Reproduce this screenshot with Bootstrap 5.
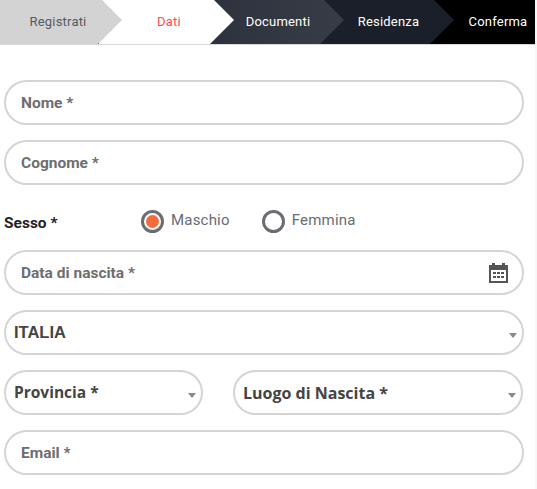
<!DOCTYPE html>
<html lang="it">
<head>
<meta charset="utf-8">
<link href="https://cdn.jsdelivr.net/npm/bootstrap@5.3.0/dist/css/bootstrap.min.css" rel="stylesheet">
<style>
html,body{overflow:hidden;height:489px;background:#f7f7f7;font-family:"Roboto",sans-serif}
.pagewrap{width:535px;height:489px;background:#fff}
.stepbar{height:45px;background:#000;border-bottom:1px solid #d8d8d8;overflow:hidden;font-size:13px;letter-spacing:.2px}
.stepitem{position:relative;height:44px;display:flex;align-items:center;justify-content:center;flex:none;clip-path:polygon(0 0,calc(100% - 20px) 0,100% 20px,calc(100% - 24px) 100%,0 100%)}
.s1{background:#d3d3d3;color:#555a63;width:122px;padding-right:6px;z-index:5}
.s2{background:#fff;color:#ff4a5a;width:135px;margin-left:-23px;padding-left:5px;z-index:4}
.s3{background:linear-gradient(90deg,#2d323e,#383c46);color:#fff;width:134px;margin-left:-24px;padding-left:2px;z-index:3}
.s4{background:#1b1f29;color:#fff;width:134px;margin-left:-24px;padding-left:3px;z-index:2}
.s5{background:#000;color:#fff;width:105px;margin-left:-24px;padding-left:31px;z-index:1;clip-path:none}
.formwrap{padding:35px 11px 0 4px}
.pillfield{height:45px;border:2px solid #d4d4d4;border-radius:23px;display:flex;align-items:center;padding:2px 14px 0 15px;font-weight:700;font-size:15.5px;color:#6e6e6e;background:#fff;margin-bottom:15px;justify-content:space-between}
.pillfield svg{margin-top:-2px}
.selfield{color:#444;padding:0 8px;position:relative;font-family:"Open Sans",sans-serif;font-size:15.5px}
.capsfield{font-family:"Liberation Sans",sans-serif;font-size:16.5px}
.luogo{font-size:16px}
.selfield::after{content:"";position:absolute;right:5px;top:21px;border-style:solid;border-width:5px 4px 0 4px;border-color:#888 transparent transparent transparent}
.sexrow{height:50px;margin-top:-7px;margin-bottom:7px;padding-top:6px;display:flex;align-items:center}
.sexlabel{font-weight:700;font-size:15.5px;color:#222;width:137px;padding-top:5px}
.radioitem{display:flex;align-items:center;gap:7px;font-size:15px;letter-spacing:.2px;color:#666c75;margin-right:32px}
.radiotext{margin-top:-2px}
.radiomark{width:23px;height:23px;border:3px solid #6c6c72;border-radius:50%;display:flex;align-items:center;justify-content:center}
.radiodot{width:13px;height:13px;border-radius:50%;background:#f56c3a}
.halfrow{display:flex;gap:30px}
.prov{width:199px}
.luogo{width:290px}
</style>
</head>
<body>
<div class="pagewrap">
<div class="stepbar d-flex">
  <div class="stepitem s1">Registrati</div>
  <div class="stepitem s2">Dati</div>
  <div class="stepitem s3">Documenti</div>
  <div class="stepitem s4">Residenza</div>
  <div class="stepitem s5">Conferma</div>
</div>
<form class="formwrap">
  <div class="pillfield">Nome *</div>
  <div class="pillfield">Cognome *</div>
  <div class="sexrow">
    <div class="sexlabel">Sesso *</div>
    <div class="radioitem"><span class="radiomark"><span class="radiodot"></span></span><span class="radiotext">Maschio</span></div>
    <div class="radioitem"><span class="radiomark"></span><span class="radiotext">Femmina</span></div>
  </div>
  <div class="pillfield">Data di nascita *
    <svg width="19" height="20" viewBox="0 0 19 20"><path fill="#555" fill-rule="evenodd" d="M3 0h3v2h7V0h3v2h3v18H0V2h3zM2 7v11h15V7z"/><g fill="#555"><rect x="4" y="9" width="3" height="2"/><rect x="8" y="9" width="3" height="2"/><rect x="12" y="9" width="3" height="2"/><rect x="4" y="13" width="3" height="2"/><rect x="8" y="13" width="3" height="2"/><rect x="12" y="13" width="3" height="2"/></g></svg>
  </div>
  <div class="pillfield selfield capsfield">ITALIA</div>
  <div class="halfrow">
    <div class="pillfield selfield prov">Provincia *</div>
    <div class="pillfield selfield luogo">Luogo di Nascita *</div>
  </div>
  <div class="pillfield">Email *</div>
</form>
</div>
<script src="https://cdn.jsdelivr.net/npm/bootstrap@5.3.0/dist/js/bootstrap.bundle.min.js"></script>
</body>
</html>
